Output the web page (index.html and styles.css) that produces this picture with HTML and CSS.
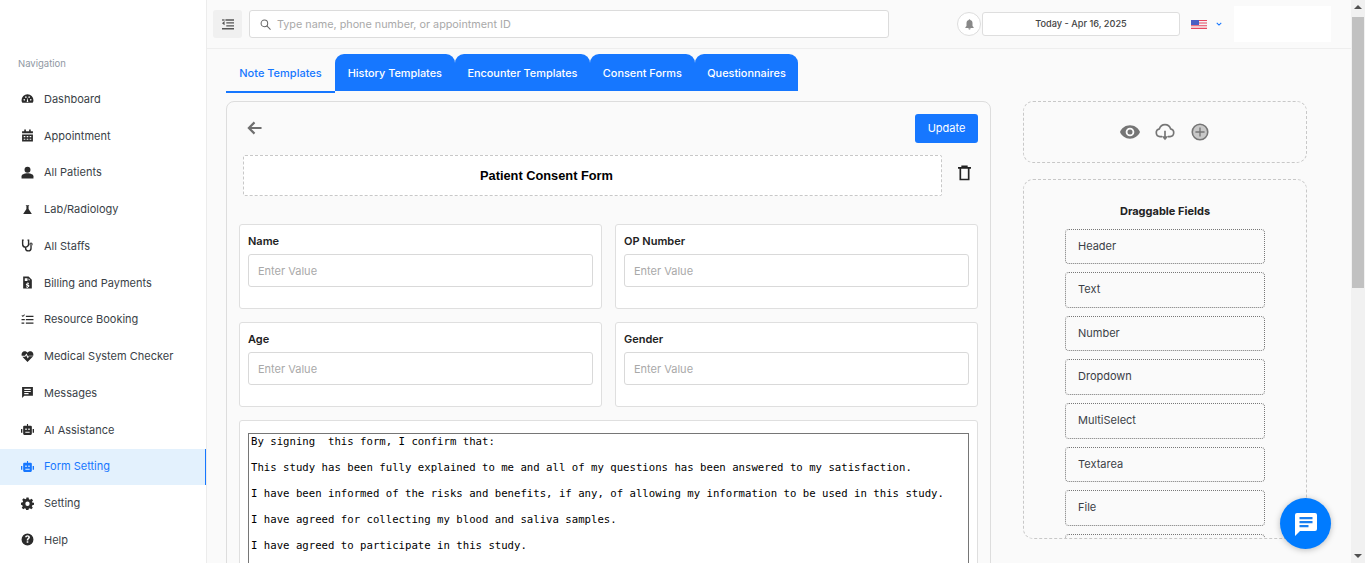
FILE: index.html
```html
<!DOCTYPE html>
<html lang="en">
<head>
<meta charset="utf-8">
<title>Form Setting</title>
<link rel="stylesheet" href="styles.css">
</head>
<body>
<div class="app">
  <aside class="sidebar">
    <div class="nav-label">Navigation</div>
    <nav class="nav">
      <a class="nav-item"><svg class="ico" viewBox="0 0 24 24"><path d="M12 4a11 11 0 0 0-11 11c0 2 .6 3.500 1.500 5h19c.9-1.500 1.500-3 1.500-5A11 11 0 0 0 12 4zm-6 12a1.500 1.500 0 1 1 0-3 1.500 1.500 0 0 1 0 3zm3-5a1.500 1.500 0 1 1 0-3 1.500 1.500 0 0 1 0 3zm4.500 7.500h-3L12 10l1.500 8.500zM18 16a1.500 1.500 0 1 1 0-3 1.500 1.500 0 0 1 0 3zm-3-5a1.500 1.500 0 1 1 0-3 1.500 1.500 0 0 1 0 3z"/></svg>Dashboard</a>
      <a class="nav-item"><svg class="ico" viewBox="0 0 24 24"><path d="M6 1h3v3h6V1h3v3h4v4H2V4h4V1zM2 10h20v13H2V10zm3 3v2h3v-2H5zm5.500 0v2h3v-2h-3zm5.500 0v2h3v-2h-3zM5 18v2h3v-2H5zm5.500 0v2h3v-2h-3zm5.500 0v2h3v-2h-3z"/></svg>Appointment</a>
      <a class="nav-item"><svg class="ico" viewBox="0 0 24 24"><circle cx="12" cy="7" r="5.500"/><path d="M1 23v-4c0-3 5-5.500 11-5.500S23 16 23 19v4H1z"/></svg>All Patients</a>
      <a class="nav-item"><svg class="ico" viewBox="0 0 24 24"><path d="M9 4h6v1.500h-1V11l6 9.500H4L10 11V5.500H9V4z"/></svg>Lab/Radiology</a>
      <a class="nav-item"><svg class="ico" viewBox="0 0 24 24"><path class="line" d="M5 2H3v7c0 4 3 6 5.500 6S14 13 14 9V2h-2M8.500 15v2a5 5 0 0 0 10 0v-4" stroke-width="2.600"/><circle class="line" cx="18.500" cy="9.500" r="2" stroke-width="2"/></svg>All Staffs</a>
      <a class="nav-item"><svg class="ico" viewBox="0 0 24 24"><path d="M4 1h10l6 6v16H4V1zm3 3v5h5V4H7zm7 0v4h3l-3-4zm-2.500 8v1.200c-1.500.3-2.500 1.200-2.500 2.500 0 3 4 2 4 3.300 0 .9-2.500.8-3.700-.2v1.800c.6.400 1.400.6 2.200.7V22h1.500v-1.400c1.600-.3 2.500-1.300 2.500-2.600 0-3-4-2.200-4-3.300 0-.8 2-.7 3.300 0v-1.700c-.5-.2-1-.4-1.800-.5V12h-1.500z"/></svg>Billing and Payments</a>
      <a class="nav-item"><svg class="ico" viewBox="0 0 24 24"><path d="M9 5h14v2.500H9V5zm0 6h14v2.500H9V11zm0 6.500h14V20H9v-2.500zM1 5l1.200-1.200L3.500 5 6 2.500 7.200 3.700 3.500 7.500 1 5zm0 6h6v2.500H1V11zm0 6.500h5V20H1v-2.500z"/></svg>Resource Booking</a>
      <a class="nav-item"><svg class="ico" viewBox="0 0 24 24"><path d="M12 22 2.500 12.500h5.300l1.700-3 3 6 2.500-4h7.500L12 22zM1.300 10.500C.2 6 3 2.500 7 2.500c2 0 3.800 1 5 2.700 1.200-1.700 3-2.700 5-2.700 4 0 6.800 3.500 5.700 8h-8.300l-1.200 2-3.200-6.200-2.800 4.200H1.300z"/></svg>Medical System Checker</a>
      <a class="nav-item"><svg class="ico" viewBox="0 0 24 24"><path d="M2 2h20v16H6l-4 4V2zm4 3v2.200h12V5H6zm0 4v2.200h12V9H6zm0 4v2.200h8V13H6z"/></svg>Messages</a>
      <a class="nav-item"><svg class="ico" viewBox="0 0 24 24"><path d="M11 2h2v3h5a2 2 0 0 1 2 2v13a2 2 0 0 1-2 2H6a2 2 0 0 1-2-2V7a2 2 0 0 1 2-2h5V2zM8 10v3h2.500v-3H8zm5.500 0v3H16v-3h-2.500zM8 16v2h8v-2H8zM0 11h2.500v7H0v-7zm21.500 0H24v7h-2.500v-7z"/></svg>AI Assistance</a>
      <a class="nav-item active"><svg class="ico" viewBox="0 0 24 24"><path d="M11 2h2v3h5a2 2 0 0 1 2 2v13a2 2 0 0 1-2 2H6a2 2 0 0 1-2-2V7a2 2 0 0 1 2-2h5V2zM8 10v3h2.500v-3H8zm5.500 0v3H16v-3h-2.500zM8 16v2h8v-2H8zM0 11h2.500v7H0v-7zm21.500 0H24v7h-2.500v-7z"/></svg>Form Setting</a>
      <a class="nav-item"><svg class="ico" viewBox="0 0 24 24"><path d="m10 1h4l.7 3.200 1.900.8 2.800-1.800 2.800 2.800-1.800 2.800.8 1.900L24 10.400v3.900l-3.200.7-.8 1.900 1.800 2.800-2.800 2.800-2.800-1.800-1.900.8-.7 3.200h-4l-.7-3.200-1.900-.8-2.800 1.800L1.400 19.700 3.200 17l-.8-1.900L0 14.300v-3.900l3.200-.7.800-1.900L2.200 5l2.800-2.800 2.800 1.800 1.900-.8L10 1zm2 7.500a4 4 0 1 0 0 8 4 4 0 0 0 0-8z"/></svg>Setting</a>
      <a class="nav-item"><svg class="ico" viewBox="0 0 24 24"><path fill-rule="evenodd" d="M12 1a11 11 0 1 0 0 22 11 11 0 0 0 0-22zm-1.500 17v-3h3v3h-3zm4.600-7.200c-.9 1-1.600 1.300-1.600 3h-3c0-2.600 1-3.400 2-4.300.7-.6 1-1 1-1.700 0-.8-.7-1.300-1.500-1.300S10.500 7 10.500 8h-3c0-2.500 2-4 4.500-4s4.500 1.500 4.500 3.800c0 1.300-.7 2.200-1.400 3z"/></svg>Help</a>
    </nav>
  </aside>

  <main class="main">
    <header class="topbar">
      <button class="menu-btn" type="button"><svg class="menu-ico" viewBox="0 0 14 12"><path d="M4 0h10v1.500H4zM5 3.400h9v1.500H5zM5 6.800h9v1.500H5zM0 10.200h14v1.500H0zM0 4.400l3-2.400v5z"/><path d="M0 0h3v1.500H0z"/></svg></button>
      <label class="search">
        <svg class="search-ico" viewBox="0 0 12 12" fill="none"><circle cx="4.800" cy="4.800" r="3.600"/><path d="m7.500 7.500 4 4"/></svg>
        <input class="search-input" type="text" placeholder="Type name, phone number, or appointment ID">
      </label>
      <div class="top-right">
        <span class="bell"><svg viewBox="0 0 12 14"><path d="M6 0c.7 0 1 .5 1 1.100C9 1.600 10 3.200 10 5.200V9l1.500 1.500v1h-11v-1L2 9V5.200c0-2 1-3.600 3-4.100C5 .5 5.300 0 6 0zM4.500 12h3c0 1-.6 1.800-1.500 1.800S4.500 13 4.500 12z"/></svg></span>
        <div class="date">Today - Apr 16, 2025</div>
        <svg class="flag" viewBox="0 0 16 9"><rect width="16" height="9" fill="#f4f4f6"/><path d="M0 0h16v1H0zM0 2.600h16v1H0zM0 5.200h16v1H0zM0 7.800h16v1.200H0z" fill="#e7475e"/><rect width="8" height="5" fill="#4a5fc4"/></svg>
        <svg class="chev" viewBox="0 0 8 5" fill="none"><path d="m1 1 3 3 3-3"/></svg>
        <div class="profile"></div>
      </div>
    </header>

    <div class="content">
      <div class="tabs">
        <div class="tab current">Note Templates</div>
        <div class="tab">History Templates</div>
        <div class="tab">Encounter Templates</div>
        <div class="tab">Consent Forms</div>
        <div class="tab">Questionnaires</div>
      </div>

      <div class="workspace">
        <section class="card">
          <div class="card-head">
            <svg class="back" viewBox="0 0 16 14" fill="none"><path d="M15.500 7H2M8 1 2 7l6 6"/></svg>
            <button class="update" type="button">Update</button>
          </div>
          <div class="title-row">
            <div class="title-box">Patient Consent Form</div>
            <svg class="trash" viewBox="0 0 14 16" fill="none"><path d="M0 2.500h14M4.500 2.500V.8h5v1.700M2.500 3v12h9V3" /></svg>
          </div>
          <div class="fields">
            <div class="field"><div class="field-label">Name</div><input class="field-input" type="text" placeholder="Enter Value"></div>
            <div class="field"><div class="field-label">OP Number</div><input class="field-input" type="text" placeholder="Enter Value"></div>
            <div class="field"><div class="field-label">Age</div><input class="field-input" type="text" placeholder="Enter Value"></div>
            <div class="field"><div class="field-label">Gender</div><input class="field-input" type="text" placeholder="Enter Value"></div>
            <div class="field wide"><textarea class="consent" rows="14">By signing  this form, I confirm that:

This study has been fully explained to me and all of my questions has been answered to my satisfaction.

I have been informed of the risks and benefits, if any, of allowing my information to be used in this study.

I have agreed for collecting my blood and saliva samples.

I have agreed to participate in this study.</textarea></div>
          </div>
        </section>

        <aside class="side">
          <div class="tools">
            <svg class="tool" viewBox="0 0 24 24"><path fill-rule="evenodd" d="M12 4C6.500 4 2 7.400 0 12c2 4.600 6.500 8 12 8s10-3.400 12-8c-2-4.600-6.500-8-12-8zm0 13.200a5.200 5.200 0 1 1 0-10.400 5.200 5.200 0 0 1 0 10.400zM12 9a3 3 0 1 0 0 6 3 3 0 0 0 0-6z"/></svg>
            <svg class="tool" viewBox="0 0 24 24"><path class="tool-line" d="M8.500 17.500H6a4.700 4.700 0 0 1-.7-9.300A7 7 0 0 1 18.700 8.200 4.700 4.700 0 0 1 18 17.500h-2.500"/><path class="tool-line" d="M12 10.500v8"/><path d="M8 17h8l-4 5z"/></svg>
            <svg class="tool" viewBox="0 0 24 24"><circle cx="12" cy="12" r="9.300" fill="#c8c8c8" stroke="#757575" stroke-width="1.900"/><path d="M11.200 6.500h1.600v4.700h4.700v1.600h-4.700v4.700h-1.600v-4.700H6.500v-1.600h4.700z"/></svg>
          </div>
          <div class="palette">
            <h3 class="palette-title">Draggable Fields</h3>
            <div class="drag">Header</div>
            <div class="drag">Text</div>
            <div class="drag">Number</div>
            <div class="drag">Dropdown</div>
            <div class="drag">MultiSelect</div>
            <div class="drag">Textarea</div>
            <div class="drag">File</div>
            <div class="drag"></div>
          </div>
        </aside>
      </div>
    </div>
  </main>
  <div class="scrollbar"><span class="sb-up"></span><span class="sb-thumb"></span><span class="sb-down"></span></div>
</div>
<button class="fab" type="button"><svg viewBox="0 0 24 24"><path fill="#fff" d="M3 1h18a2 2 0 0 1 2 2v14a2 2 0 0 1-2 2H6l-5 5V3a2 2 0 0 1 2-2z"/><path fill="#1a7ff0" d="M5.500 5h13v2.200h-13zM5.500 9h13v2.200h-13zM5.500 13h9v2.200h-9z"/></svg></button>
</body>
</html>
```
FILE: styles.css
```css
* { box-sizing: border-box; }
html, body { margin: 0; height: 100%; overflow: hidden; }
body { font-family: "Inter", "Liberation Sans", sans-serif; font-size: 11px; color: #3a3f47; background: #fafafa; }
.app { display: flex; height: 563px; overflow: hidden; }

.sidebar { flex: 0 0 207px; background: #fff; border-right: 1px solid #ececec; padding-top: 58px; }
.nav-label { font-size: 9.5px; line-height: 12px; color: #8f98a3; padding-left: 18px; margin-bottom: 11px; }
.nav { display: flex; flex-direction: column; gap: 0.75px; }
.nav-item { display: flex; align-items: center; height: 36px; padding: 0 0 0.4px 21px; font-size: 11px; color: #3a3f47; }
.nav-item.active { background: #e3f1fd; color: #1677ff; border-right: 1px solid #1677ff; }
.ico { width: 13px; height: 13px; margin-right: 10px; fill: #2b2b2b; flex: none; }
.ico .line { fill: none; stroke: #2b2b2b; }
.active .ico { fill: #1677ff; }

.main { flex: 1; min-width: 0; }
.topbar { display: flex; align-items: center; height: 49px; padding: 0 20px 0 6px; border-bottom: 1px solid #eeeeee; }
.menu-btn { width: 29px; height: 28px; background: #f0f0f0; border: 0; border-radius: 3px; padding: 0; display: flex; align-items: center; justify-content: center; }
.menu-ico { width: 12px; height: 11px; fill: #555; }
.search { display: flex; align-items: center; width: 640px; height: 28px; margin-left: 7px; padding: 0 10px; background: #fff; border: 1px solid #dcdcdc; border-radius: 3px; }
.search-ico { width: 11px; height: 11px; stroke: #666; stroke-width: 1.100; flex: none; }
.search-input { flex: 1; border: 0; outline: 0; background: none; margin-left: 6px; padding: 0; font: 10.8px "Inter", sans-serif; }
.search-input::placeholder { color: #a9a9a9; opacity: 1; }
.top-right { display: flex; align-items: center; margin-left: auto; }
.bell { width: 24px; height: 24px; border: 1px solid #ddd; border-radius: 50%; background: #fff; display: flex; align-items: center; justify-content: center; margin-right: 1px; }
.bell svg { width: 9px; height: 11px; fill: #888; }
.date { width: 198px; height: 24px; line-height: 22px; text-align: center; font-size: 9.2px; font-weight: 500; background: #fff; border: 1px solid #dedede; border-radius: 3px; color: #444; }
.flag { width: 16px; height: 9px; margin-left: 11px; }
.chev { width: 6px; height: 4px; margin-left: 9px; stroke: #1677ff; stroke-width: 1.400; }
.profile { width: 97px; height: 36px; margin-left: 12px; background: #fff; }

.content { padding: 5px 0 0 19px; }
.tabs { display: flex; height: 39px; }
.tab { height: 37px; padding: 0 12.7px; line-height: 38px; font-size: 10.9px; font-weight: 500; color: #fff; background: #1677ff; border-radius: 9px 9px 0 0; }
.tab.current { height: 39px; width: 109px; padding: 0; text-align: center; font-size: 11px; color: #1677ff; background: none; border-bottom: 2px solid #1677ff; border-radius: 0; }

.workspace { display: flex; align-items: flex-start; margin-top: 8px; }
.card { flex: 0 0 765px; padding: 12px; border: 1px solid #dddddd; border-radius: 8px; }
.card-head { display: flex; justify-content: space-between; align-items: center; padding-left: 8px; height: 29px; }
.back { width: 15px; height: 14px; margin-bottom: 2px; stroke: #6f6f6f; stroke-width: 2.300; }
.update { width: 63px; height: 29px; padding: 0 0 2px; border: 0; border-radius: 3px; background: #1677ff; color: #fff; font: 11px "Inter", sans-serif; }
.title-row { display: flex; align-items: center; margin: 12px 0 28px 4px; }
.title-box { width: 699px; height: 41px; text-align: center; padding-right: 92px; background: #fff; border: 1px dashed #c8c8c8; border-radius: 2px; font: 700 12.8px/39px "Liberation Sans", sans-serif; color: #000; }
.trash { width: 13px; height: 16px; margin: -6px 0 0 16px; stroke: #222; stroke-width: 1.800; }
.fields { display: grid; grid-template-columns: 363px 363px; gap: 13px; }
.field { height: 85px; padding: 10px 8px 0; background: #fff; border: 1px solid #dfdfdf; border-radius: 3px; }
.field.wide { grid-column: 1 / -1; height: 300px; padding-top: 12px; }
.field-label { font-size: 11px; line-height: 13px; font-weight: 600; color: #222; margin-bottom: 6px; }
.field-input { display: block; width: 100%; height: 33px; padding: 0 9px; background: #fff; border: 1px solid #d9d9d9; border-radius: 3px; font: 11px "Inter", sans-serif; outline: 0; }
.field-input::placeholder { color: #a9a9a9; opacity: 1; }
.consent { display: block; width: 100%; height: 280px; margin: 0; padding: 1px 2px; resize: none; border: 1px solid #767676; font: 10.67px/13px "DejaVu Sans Mono", monospace; color: #000; background: #fff; }

.side { flex: 0 0 284px; margin-left: 32px; }
.tools { display: flex; justify-content: center; align-items: center; gap: 15px; height: 62px; border: 1px dashed #c8c8c8; border-radius: 10px; }
.tool { width: 20px; height: 20px; fill: #757575; }
.tool-line { fill: none; stroke: #757575; stroke-width: 2; }
.palette { margin-top: 16px; height: 360px; padding: 25px 41px 0; overflow: hidden; border: 1px dashed #c8c8c8; border-radius: 10px; }
.palette-title { margin: 0 0 10.7px; font-size: 11px; line-height: 13px; font-weight: 700; text-align: center; color: #222; }
.drag { height: 35.6px; line-height: 33px; margin-bottom: 8px; padding-left: 12px; border: 1px dotted #777; border-radius: 4px; font-size: 11px; color: #3a3f47; }

.scrollbar { flex: 0 0 14px; margin-left: auto; display: flex; flex-direction: column; align-items: center; background: #f1f1f1; }
.sb-up { margin-top: 5px; border: 4px solid transparent; border-top: 0; border-bottom: 4px solid #505050; }
.sb-thumb { width: 12px; height: 271px; margin-top: 8px; background: #c1c1c1; }
.sb-down { margin-top: auto; margin-bottom: 5px; border: 4px solid transparent; border-bottom: 0; border-top: 4px solid #505050; }

.fab { position: fixed; left: 1280px; top: 498px; width: 51px; height: 51px; border: 0; border-radius: 50%; background: #007bff; box-shadow: 0 1px 6px rgba(0,0,0,.25); display: flex; align-items: center; justify-content: center; padding: 0; }
.fab svg { width: 24px; height: 24px; }
```
